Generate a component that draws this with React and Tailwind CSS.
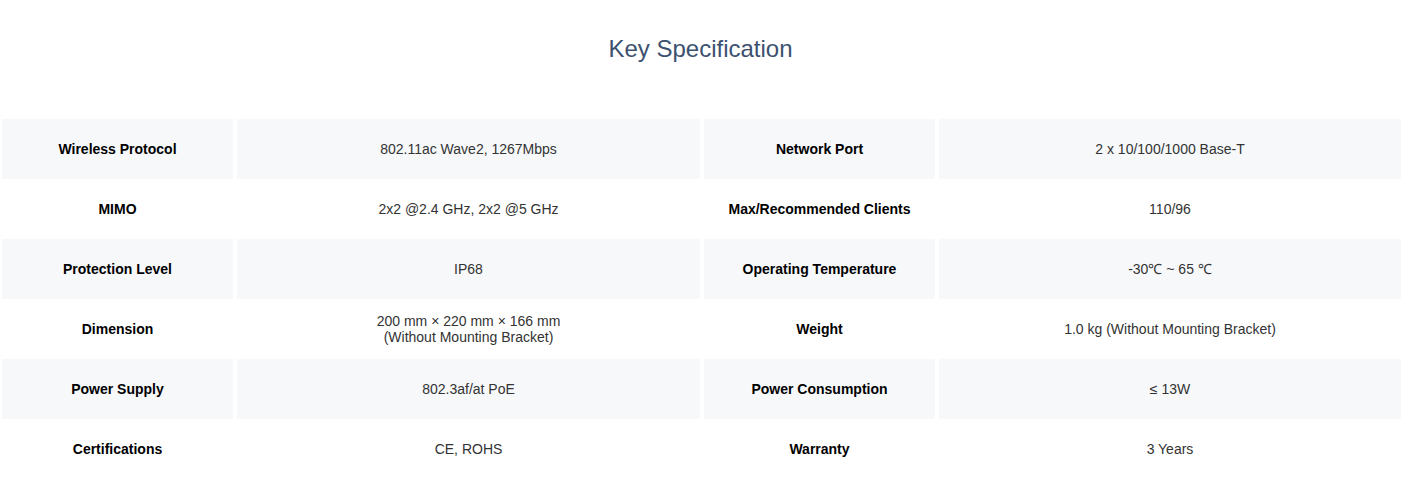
const specs = [
  ["Wireless Protocol", "802.11ac Wave2, 1267Mbps", "Network Port", "2 x 10/100/1000 Base-T"],
  ["MIMO", "2x2 @2.4 GHz, 2x2 @5 GHz", "Max/Recommended Clients", "110/96"],
  ["Protection Level", "IP68", "Operating Temperature", "-30℃ ~ 65 ℃"],
  ["Dimension", ["200 mm × 220 mm × 166 mm", "(Without Mounting Bracket)"], "Weight", "1.0 kg (Without Mounting Bracket)"],
  ["Power Supply", "802.3af/at PoE", "Power Consumption", "≤ 13W"],
  ["Certifications", "CE, ROHS", "Warranty", "3 Years"],
]

function Value({ value }) {
  if (Array.isArray(value)) {
    return (
      <div className="leading-4">
        {value.map((line, i) => <div key={i}>{line}</div>)}
      </div>
    )
  }
  return <span>{value}</span>
}

function SpecRow({ row, shaded }) {
  const bg = shaded ? "bg-[#f7f8fa]" : "bg-white"
  const [k1, v1, k2, v2] = row
  return (
    <>
      <div className={`${bg} h-[60px] flex items-center justify-center font-bold text-black`}>{k1}</div>
      <div className={`${bg} h-[60px] flex items-center justify-center text-center text-[#333]`}><Value value={v1} /></div>
      <div className={`${bg} h-[60px] flex items-center justify-center font-bold text-black`}>{k2}</div>
      <div className={`${bg} h-[60px] flex items-center justify-center text-center text-[#333]`}><Value value={v2} /></div>
    </>
  )
}

export default function App() {
  return (
    <div className="w-full min-h-[487px] bg-white font-['Liberation_Sans',Arial,sans-serif]">
      <h2 className="pt-[34px] h-[119px] text-center text-[24px] leading-[30px] text-[#3c5170]">Key Specification</h2>
      <div className="pl-[2px] grid grid-cols-[231px_463px_231px_1fr] gap-x-1 text-[14px]">
        {specs.map((row, i) => (
          <SpecRow key={i} row={row} shaded={i % 2 === 0} />
        ))}
      </div>
    </div>
  )
}
